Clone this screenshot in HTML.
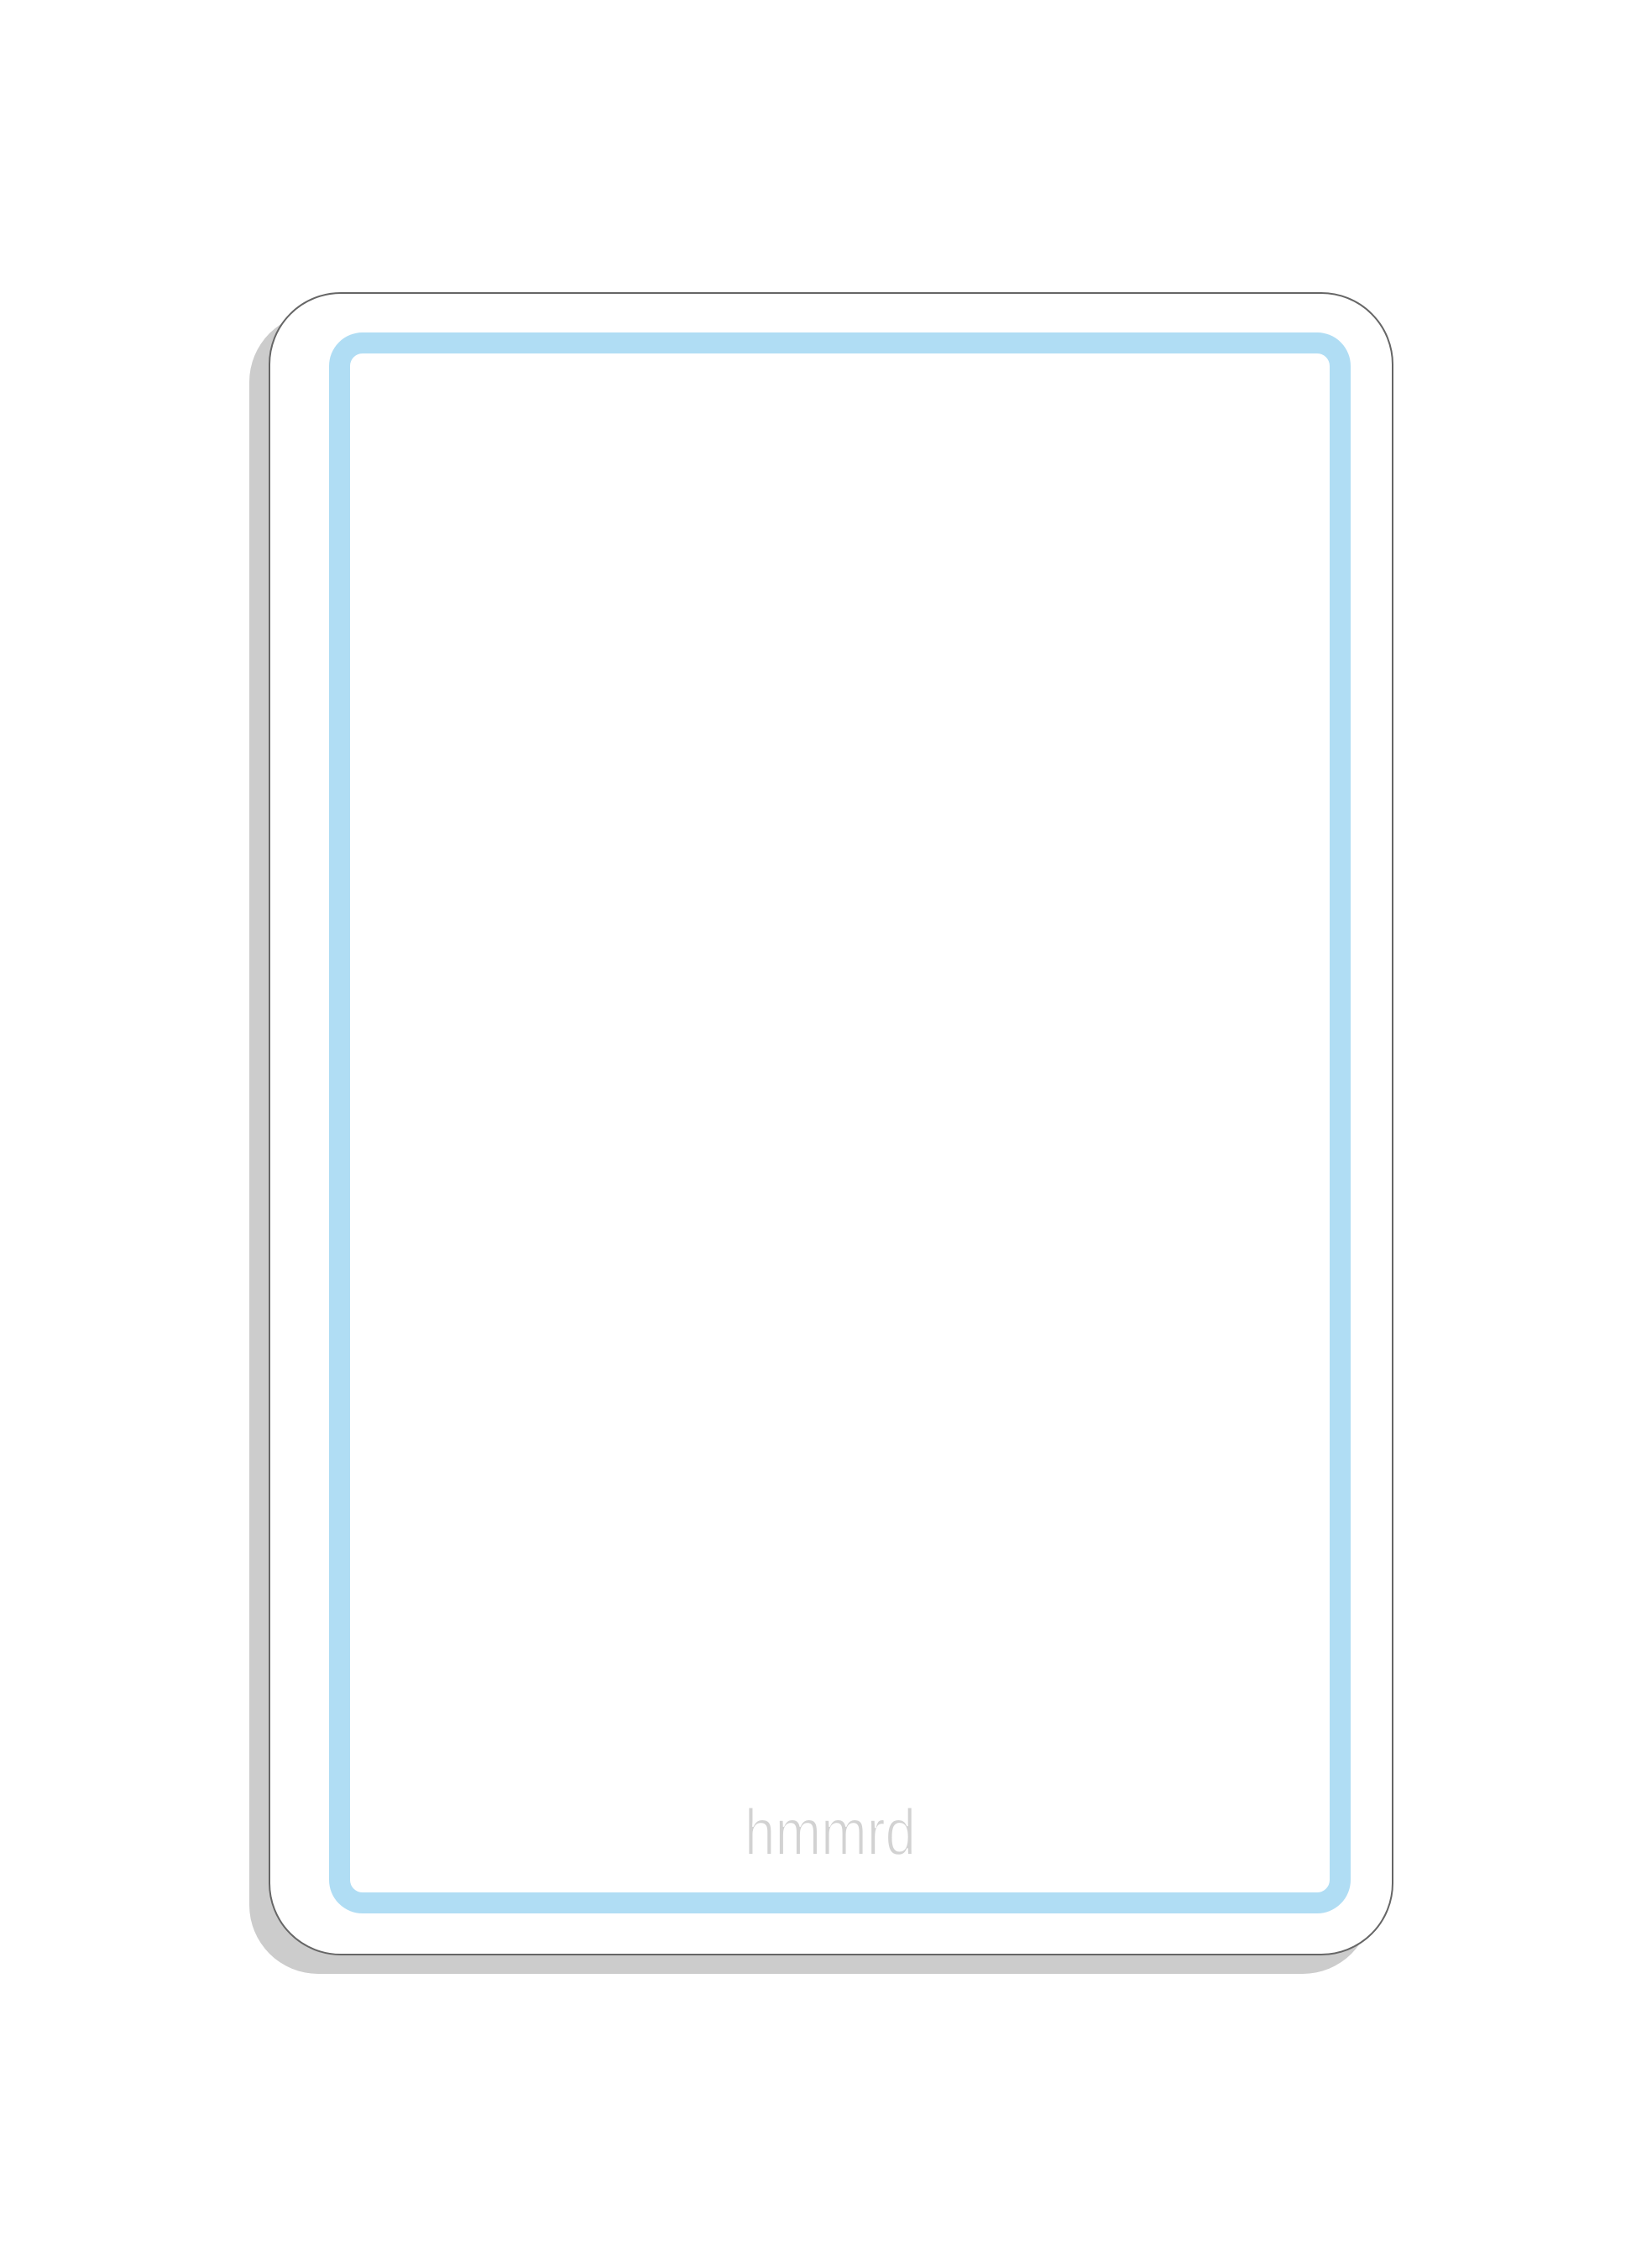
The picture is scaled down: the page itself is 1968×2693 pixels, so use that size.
<!DOCTYPE html>
<html><head><meta charset="utf-8"><style>
html,body{margin:0;padding:0;background:#fff;}
body{width:1968px;height:2693px;position:relative;overflow:hidden;}
.sh{position:absolute;left:297px;top:373px;width:1337px;height:1978px;background:#cccccc;border-radius:82px;}
.card{position:absolute;left:320px;top:348px;width:1336px;height:1977px;background:#fff;border:2px solid #666;border-radius:86px;}
.blue{position:absolute;left:392px;top:396px;width:1167px;height:1833px;border:25px solid #b0ddf4;border-radius:40px;}
svg{position:absolute;left:0;top:0;}
</style></head><body>
<div class="sh"></div>
<div class="card"></div>
<div class="blue"></div>
<svg width="1968" height="2693"><text x="887" y="2209" font-family="Liberation Sans, sans-serif" font-size="78" fill="#d2d2d2" stroke="#fff" stroke-width="2" textLength="204" lengthAdjust="spacingAndGlyphs">hmmrd</text></svg>
</body></html>
